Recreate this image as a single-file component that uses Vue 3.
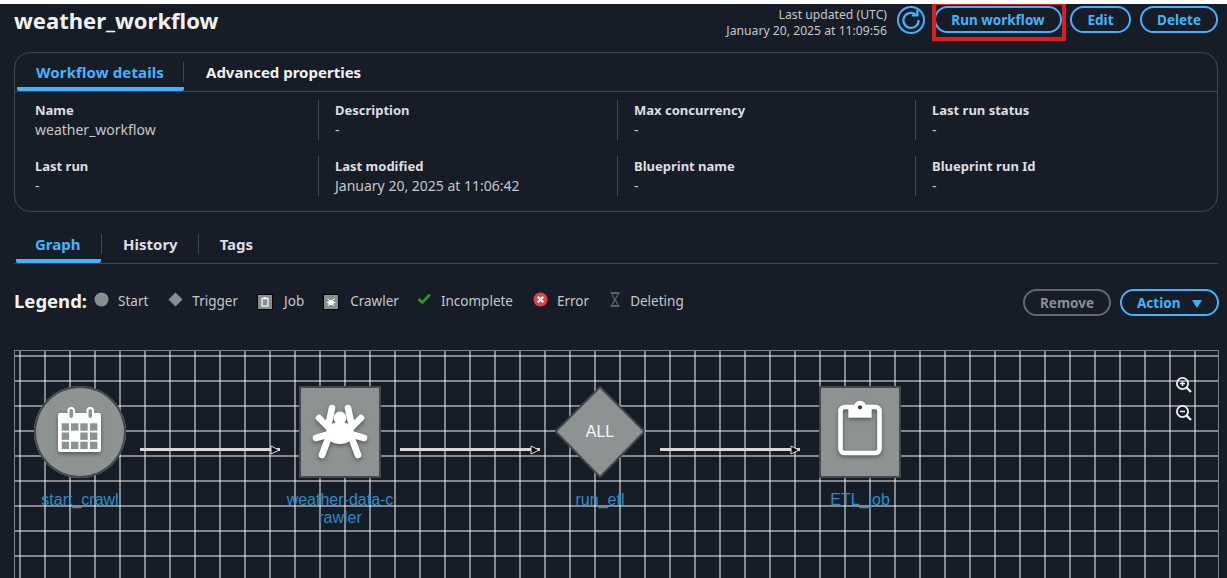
<script setup>
const details = [
  { label: 'Name', value: 'weather_workflow' },
  { label: 'Description', value: '-' },
  { label: 'Max concurrency', value: '-' },
  { label: 'Last run status', value: '-' },
  { label: 'Last run', value: '-' },
  { label: 'Last modified', value: 'January 20, 2025 at 11:06:42' },
  { label: 'Blueprint name', value: '-' },
  { label: 'Blueprint run Id', value: '-' },
]
const arrows = [125, 385, 645]
const nodes = [
  { name: 'start_crawl', kind: 'circle', left: 20 },
  { name: 'weather-data-crawler', kind: 'rect', icon: 'spider', left: 280 },
  { name: 'run_etl', kind: 'diamond', left: 540 },
  { name: 'ETL_job', kind: 'rect', icon: 'clip', left: 800 },
]
const cols = [26.7, 36, 45.3, 55]
const rows = [36.3, 45.5, 54.7]
const spiderLegs = [
  [33, 22, 30, 36], [20, 32, 33, 45], [17, 52, 34, 47], [23, 69, 29, 53],
  [49, 22, 52, 36], [62, 32, 49, 45], [65, 52, 48, 47], [59, 69, 53, 53],
]
</script>

<template>
  <div class="page">
    <header class="head">
      <h1>weather_workflow</h1>
      <div class="head-right">
        <div class="updated">
          <div>Last updated (UTC)</div>
          <div>January 20, 2025 at 11:09:56</div>
        </div>
        <svg class="refresh" width="30" height="30" viewBox="0 0 30 30" fill="none" stroke="#42b4ff">
          <circle cx="15" cy="15" r="13" stroke-width="2" />
          <path d="M20.6 10.2A7.6 7.6 0 1 0 22.6 15" stroke-width="2.2" />
          <path d="M15.8 10.4H21.4V4.8" stroke-width="2.2" />
        </svg>
        <div class="run-wrap">
          <button class="btn run">Run workflow</button>
          <span class="red-box"></span>
        </div>
        <button class="btn edit">Edit</button>
        <button class="btn delete">Delete</button>
      </div>
    </header>

    <section class="card">
      <div class="card-tabs">
        <div class="ctab active">Workflow details</div>
        <div class="ctab">Advanced properties</div>
      </div>
      <div class="details">
        <div v-for="(d, i) in details" :key="d.label" class="cell" :class="{ first: i % 4 === 0 }">
          <div class="label">{{ d.label }}</div>
          <div class="value">{{ d.value }}</div>
        </div>
      </div>
    </section>

    <nav class="tabs">
      <div class="tab active">Graph</div>
      <div class="tab history">History</div>
      <div class="tab tags">Tags</div>
    </nav>

    <div class="legend-row">
      <div class="legend">
        <strong>Legend:</strong>
        <div class="item">
          <svg width="15" height="15" viewBox="0 0 15 15"><circle cx="7.5" cy="7.5" r="7" fill="#879091" /></svg>
          <span>Start</span>
        </div>
        <div class="item">
          <svg width="15" height="15" viewBox="0 0 15 15"><path d="M7.5 .5 14.5 7.5 7.5 14.5 .5 7.5Z" fill="#879091" /></svg>
          <span>Trigger</span>
        </div>
        <div class="item boxed">
          <svg width="16" height="16" viewBox="0 0 16 16">
            <rect x=".5" y=".5" width="15" height="15" fill="#879091" stroke="#050505" />
            <rect x="5" y="4.5" width="6" height="7.5" fill="none" stroke="#fff" stroke-width="1.2" />
            <rect x="6.5" y="3.2" width="3" height="2" fill="#fff" />
          </svg>
          <span>Job</span>
        </div>
        <div class="item boxed crawler">
          <svg width="16" height="16" viewBox="0 0 16 16">
            <rect x=".5" y=".5" width="15" height="15" fill="#879091" stroke="#050505" />
            <ellipse cx="8" cy="8.5" rx="2.8" ry="2.5" fill="#fff" />
            <path d="M4.5 4.5 7 7M11.5 4.5 9 7M3.6 8.5H12.4M4.8 12 7 9.5M11.2 12 9 9.5" stroke="#fff" stroke-width="1" />
          </svg>
          <span>Crawler</span>
        </div>
        <div class="item">
          <svg width="15" height="15" viewBox="0 0 15 15" fill="none"><path d="M1.5 7 5.2 10.5 13 2.6" stroke="#2ea01f" stroke-width="2.6" /></svg>
          <span>Incomplete</span>
        </div>
        <div class="item">
          <svg width="15" height="15" viewBox="0 0 15 15">
            <circle cx="7.5" cy="7.5" r="7" fill="#e8404a" />
            <path d="M4.8 4.8 10.2 10.2M10.2 4.8 4.8 10.2" stroke="#fff" stroke-width="2.2" />
          </svg>
          <span>Error</span>
        </div>
        <div class="item">
          <svg width="12" height="15" viewBox="0 0 12 15" fill="none" stroke="#5a5f66" stroke-width="1.3">
            <path d="M1.5 1H10.5M1.5 14H10.5" stroke-width="1.8" />
            <path d="M3 1.5C3 5.5 8 8.5 9 13.5M9 1.5C9 5.5 4 8.5 3 13.5" />
          </svg>
          <span>Deleting</span>
        </div>
      </div>
      <div class="legend-actions">
        <button class="btn remove">Remove</button>
        <button class="btn action">Action <i class="caret"></i></button>
      </div>
    </div>

    <div class="graph">
      <div v-for="x in arrows" :key="x" class="arrow" :style="{ left: x + 'px' }">
        <svg class="head-arrow" width="10" height="10" viewBox="0 0 10 10">
          <path d="M1 1 9 5 1 9Z" fill="#0b0b0b" stroke="#e4e0dc" stroke-width="1" />
        </svg>
      </div>

      <div v-for="n in nodes" :key="n.name" class="node" :style="{ left: n.left + 'px' }">
        <div v-if="n.kind === 'circle'" class="shape circle">
          <svg width="92" height="92" viewBox="-1 -1 92 92">
            <rect x="23" y="26" width="43" height="39" rx="2" fill="#fff" class="shadowed" />
            <g v-for="(x, ci) in cols" :key="x">
              <rect
                v-for="(y, ri) in rows"
                :key="y"
                :x="x"
                :y="y"
                width="7.4"
                height="7.4"
                :fill="ci === 1 && ri === 1 ? '#fff' : '#8d9393'"
              />
            </g>
            <rect x="33.5" y="21" width="5.5" height="11" rx="2.7" fill="#8d9393" stroke="#fff" stroke-width="2" />
            <rect x="52.5" y="21" width="5.5" height="11" rx="2.7" fill="#8d9393" stroke="#fff" stroke-width="2" />
          </svg>
        </div>

        <svg v-else-if="n.kind === 'diamond'" class="shape" width="90" height="92" viewBox="0 0 90 92">
          <path d="M45 1 89.4 45.5 45 91 .6 45.5Z" fill="#8d9393" stroke="#44484c" stroke-width="2" />
        </svg>
        <span v-if="n.kind === 'diamond'" class="all">ALL</span>

        <div v-else-if="n.kind === 'rect'" class="shape square">
          <svg v-if="n.icon === 'spider'" width="82" height="92" viewBox="0 0 82 92" class="shadowed">
            <g stroke="#fff" stroke-width="6.6" stroke-linecap="round">
              <line v-for="(l, i) in spiderLegs" :key="i" :x1="l[0]" :y1="l[1]" :x2="l[2]" :y2="l[3]" />
            </g>
            <circle cx="41" cy="32" r="6.5" fill="#fff" />
            <ellipse cx="41" cy="47" rx="14" ry="11" fill="#fff" />
          </svg>
          <svg v-else width="82" height="92" viewBox="0 0 82 92" class="shadowed">
            <rect x="21.5" y="21" width="39" height="46" rx="4" fill="none" stroke="#fff" stroke-width="4.6" />
            <path d="M29.3 19H52.7V31.7H29.3Z" fill="#fff" />
            <circle cx="41" cy="21.3" r="6.5" fill="#fff" />
            <circle cx="41" cy="21.3" r="2.1" fill="#3c4145" />
          </svg>
        </div>

        <div class="node-label">{{ n.name }}</div>
      </div>

      <div class="zoom-tools">
        <svg width="18" height="18" viewBox="0 0 18 18" fill="none" stroke="#f2f2f2">
          <circle cx="7.5" cy="7.5" r="5.6" stroke-width="1.8" />
          <path d="M11.6 11.6 16 16" stroke-width="2.2" />
          <path d="M5 7.5H10M7.5 5V10" stroke-width="1.5" />
        </svg>
        <svg width="18" height="18" viewBox="0 0 18 18" fill="none" stroke="#f2f2f2">
          <circle cx="7.5" cy="7.5" r="5.6" stroke-width="1.8" />
          <path d="M11.6 11.6 16 16" stroke-width="2.2" />
          <path d="M5 7.5H10" stroke-width="1.5" />
        </svg>
      </div>
    </div>
  </div>
</template>

<style>
html, body { margin: 0; background: #161d26; overflow: hidden; }
</style>

<style scoped>
.page {
  width: 1227px;
  height: 578px;
  box-sizing: border-box;
  border-top: 4px solid #fff;
  background: #161d26;
  color: #c6c6cd;
  font-family: "Noto Sans", "Open Sans", sans-serif;
  font-size: 14px;
  overflow: hidden;
}
.head {
  display: flex;
  justify-content: space-between;
  align-items: flex-start;
  height: 48px;
  padding: 0 9px 0 14px;
}
h1 {
  margin: 0;
  font-size: 22px;
  line-height: 32px;
  font-weight: 700;
  color: #f1f1f4;
}
.head-right { display: flex; align-items: flex-start; }
.updated {
  text-align: right;
  font-size: 12.2px;
  line-height: 16px;
  margin-top: 3px;
  color: #c6c6cd;
}
.refresh { margin: 1px 0 0 9px; }
.run-wrap { position: relative; margin-left: 8px; }
.red-box {
  position: absolute;
  left: -2px;
  top: -3px;
  width: 134px;
  height: 40px;
  box-sizing: border-box;
  border: 4px solid #e21b22;
  pointer-events: none;
}
.btn {
  height: 27px;
  box-sizing: border-box;
  padding: 1px 0 0;
  border: 2px solid #42b4ff;
  border-radius: 14px;
  background: transparent;
  color: #42b4ff;
  font-family: inherit;
  font-size: 13.5px;
  font-weight: 700;
  line-height: 22px;
}
.head .btn { margin-top: 2px; }
.run { display: block; width: 128px; }
.edit { width: 61px; margin-left: 8px; }
.delete { width: 78px; margin-left: 9px; }

.card {
  margin: 0 9px 0 14px;
  height: 160px;
  box-sizing: border-box;
  border: 1px solid #424650;
  border-radius: 16px;
}
.card-tabs {
  display: flex;
  position: relative;
  height: 39px;
  box-sizing: border-box;
  border-bottom: 1px solid #424650;
  padding-left: 2px;
  color: #f1f1f4;
  font-weight: 700;
  font-size: 15px;
}
.ctab { line-height: 38px; height: 38px; box-sizing: border-box; }
.ctab.active {
  width: 167px;
  padding-left: 19px;
  color: #42b4ff;
  border-bottom: 4px solid #42b4ff;
  border-radius: 2px;
  letter-spacing: .12px;
}
.ctab.active::after {
  content: "";
  position: absolute;
  left: 168px;
  top: 9px;
  height: 20px;
  width: 1px;
  background: #424650;
}
.ctab:not(.active) { padding-left: 22px; }
.details {
  display: grid;
  grid-template-columns: 283px 299px 298px 1fr;
  grid-auto-rows: 40px;
  row-gap: 16px;
  padding: 8px 0 0 20px;
}
.cell {
  border-left: 1px solid #424650;
  padding-left: 16px;
  line-height: 20px;
}
.cell.first { border-left: 0; padding-left: 0; }
.label { font-weight: 700; color: #dedee3; font-size: 13px; }
.value { color: #c6c6cd; font-size: 14px; }

.tabs {
  display: flex;
  align-items: flex-start;
  position: relative;
  height: 32px;
  margin: 20px 9px 0 14px;
  box-sizing: border-box;
  border-bottom: 1px solid #424650;
  padding-left: 2px;
  font-size: 15px;
  font-weight: 700;
  color: #dedee3;
}
.tab { line-height: 24px; }
.tab.active {
  width: 85px;
  height: 31px;
  box-sizing: border-box;
  padding-left: 19px;
  color: #42b4ff;
  border-bottom: 4px solid #42b4ff;
  border-radius: 2px;
}
.tab.active::after {
  content: "";
  position: absolute;
  left: 87px;
  top: 2px;
  height: 20px;
  width: 1px;
  background: #424650;
}
.history {
  margin-left: 22px;
  margin-top: 2px;
  height: 20px;
  padding-right: 20px;
  line-height: 20px;
  border-right: 1px solid #424650;
}
.tags { margin-left: 21px; margin-top: 2px; height: 20px; line-height: 20px; }

.legend-row {
  display: flex;
  justify-content: space-between;
  align-items: center;
  height: 48px;
  margin: 14px 8px 0 14px;
}
.legend { display: flex; align-items: center; margin-top: -2px; }
.legend strong {
  color: #f1f1f4;
  font-size: 18.5px;
  margin-right: 7px;
  line-height: 24px;
}
.item { display: flex; align-items: center; gap: 9px; margin-right: 20px; line-height: 20px; font-size: 13.5px; }
.item svg { margin-top: -4px; }
.item.boxed { gap: 11px; }
.item.boxed svg { margin: 1px 0 0 -1px; }
.item.crawler { margin-right: 18px; }
.legend-actions { display: flex; gap: 9px; }
.remove { width: 88px; border-color: #656871; color: #8c8c94; }
.action { width: 99px; }
.caret {
  display: inline-block;
  width: 0;
  height: 0;
  margin-left: 8px;
  border-left: 5.5px solid transparent;
  border-right: 5.5px solid transparent;
  border-top: 8px solid #42b4ff;
}

.graph {
  position: relative;
  margin: 24px 8px 0 14px;
  height: 240px;
  border-top: 1px solid #7d7f82;
  border-left: 1px solid #7d7f82;
  border-right: 1px solid #7d7f82;
  box-sizing: border-box;
  background-image:
    repeating-linear-gradient(to right, transparent 0 4px, rgba(255, 255, 255, .48) 4px 6px, transparent 6px 25px),
    repeating-linear-gradient(to bottom, transparent 0 4px, rgba(255, 255, 255, .48) 4px 6px, transparent 6px 25px);
}
.arrow {
  position: absolute;
  top: 97px;
  width: 140px;
  height: 3px;
  background: #dcd8d4;
}
.head-arrow { position: absolute; right: 0; top: -3.5px; }
.node { position: absolute; top: 35px; width: 90px; }
.shape { display: block; }
.circle {
  width: 92px;
  height: 92px;
  box-sizing: border-box;
  margin-left: -1px;
  border-radius: 50%;
  background: #8d9393;
  box-shadow: inset 0 0 0 2px #44484c;
  overflow: hidden;
}
.circle svg { display: block; }
.square {
  width: 82px;
  height: 92px;
  box-sizing: border-box;
  margin-left: 4px;
  background: #8d9393;
  box-shadow: inset 0 0 0 2px #44484c;
}
.square svg { display: block; }
.shadowed { filter: drop-shadow(0 2px 2px rgba(0, 0, 0, .4)); }
.all {
  position: absolute;
  left: 0;
  top: 34px;
  width: 90px;
  text-align: center;
  font-family: "Liberation Sans", Arial, sans-serif;
  font-size: 16px;
  line-height: 24px;
  color: #f6f6f6;
}
.node-label {
  width: 108px;
  margin: 13px 0 0 -9px;
  text-align: center;
  font-family: "Liberation Sans", Arial, sans-serif;
  font-size: 16px;
  line-height: 18px;
  color: #2b8ccc;
  word-break: break-all;
}
.zoom-tools {
  position: absolute;
  left: 1160px;
  top: 25px;
  display: flex;
  flex-direction: column;
  gap: 10px;
}
.zoom-tools svg { display: block; }
</style>
